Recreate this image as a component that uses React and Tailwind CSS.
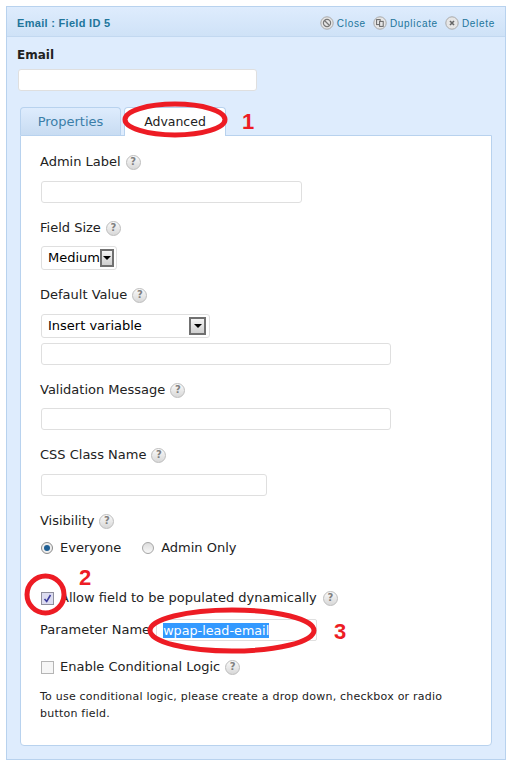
import React from 'react';

const Help = () => (
  <span className="inline-flex h-[15px] w-[15px] items-center justify-center rounded-full border border-[#bdbdbd] bg-gradient-to-b from-[#fafafa] to-[#d8d8d8] text-[10px] font-bold leading-none text-[#808080]">
    ?
  </span>
);

const Label = ({ children, className = '' }) => (
  <div className={`flex h-[16px] items-center gap-[5px] text-[13px] leading-[16px] text-[#222] ${className}`}>
    <span>{children}</span>
    <Help />
  </div>
);

const TextBox = ({ className = '' }) => (
  <div className={`h-[22px] rounded-[3px] border border-[#dfdfdf] bg-white ${className}`} />
);

const Arrow = () => (
  <span className="flex h-[18px] w-[17px] items-center justify-center border-2 border-[#707070] bg-gradient-to-b from-[#f4f4f4] to-[#cfcfcf]">
    <span className="h-0 w-0 border-x-[4px] border-t-[4px] border-x-transparent border-t-black" />
  </span>
);

const ActionIcon = ({ children }) => (
  <svg width="14" height="14" viewBox="0 0 14 14" fill="none">
    <circle cx="7" cy="7" r="6.2" fill="#e6e6e6" stroke="#a9a9a9" />
    {children}
  </svg>
);

const Action = ({ label, children }) => (
  <span className="flex items-center gap-[3px]">
    <ActionIcon>{children}</ActionIcon>
    <span className="tracking-[0.7px]">{label}</span>
  </span>
);

const Ring = ({ className, width, height }) => (
  <svg className={`pointer-events-none absolute ${className}`} width={width} height={height} viewBox={`0 0 ${width} ${height}`} fill="none">
    <ellipse cx={width / 2} cy={height / 2} rx={width / 2 - 3} ry={height / 2 - 3} stroke="#ed1c24" strokeWidth="5" />
  </svg>
);

const Num = ({ className, children }) => (
  <span className={`absolute font-['Liberation_Sans',sans-serif] text-[22px] font-bold leading-none text-[#ed1c24] ${className}`}>{children}</span>
);

export default function App() {
  return (
    <div className="relative h-[766px] w-[512px] overflow-hidden bg-white pl-[6px] pt-[6px] font-['DejaVu_Sans',sans-serif]">
      <div className="h-[754px] w-[500px] border border-[#b8d2ee] bg-[#deecfd]">
        <div className="flex h-[30px] items-center justify-between border-b border-[#c2d8f0] bg-gradient-to-b from-[#deecfd] to-[#cfe2f7] pl-[10px] pr-[10px] pt-[3px] font-['Liberation_Sans',sans-serif]">
          <span className="text-[11px] font-bold tracking-[0.3px] text-[#21759b]">Email : Field ID 5</span>
          <div className="flex items-center gap-[7px] text-[10px] text-[#21759b]">
            <Action label="Close">
              <circle cx="7" cy="7" r="3.6" stroke="#777" strokeWidth="1.2" />
              <path d="M4.5 4.5l5 5" stroke="#777" strokeWidth="1.2" />
            </Action>
            <Action label="Duplicate">
              <rect x="3.6" y="3.6" width="3.6" height="5" fill="#e6e6e6" stroke="#666" />
              <rect x="6.6" y="5.4" width="3.6" height="5" fill="#e6e6e6" stroke="#666" />
            </Action>
            <Action label="Delete">
              <path d="M5 5l4 4M9 5l-4 4" stroke="#666" strokeWidth="1.6" />
            </Action>
          </div>
        </div>

        <div className="pl-[10px] pt-[10px]">
          <div className="text-[12px] font-bold leading-[16px] text-[#222]">Email</div>
          <TextBox className="ml-[1px] mt-[6px] w-[239px]" />
        </div>

        <div className="ml-[13px] mt-[16px] flex h-[28px] items-start gap-[3px]">
          <div className="flex h-[28px] w-[101px] items-center justify-center rounded-t-[4px] border border-b-0 border-[#b8d2ee] bg-gradient-to-b from-[#deecfd] to-[#c8dcf2] text-[13px] text-[#3b7ea8]">
            Properties
          </div>
          <div className="relative z-10 flex h-[29px] w-[102px] items-center justify-center rounded-t-[4px] border border-b-0 border-[#b8d2ee] bg-white text-[12.5px] text-[#222]">
            Advanced
          </div>
        </div>

        <div className="ml-[13px] h-[611px] w-[472px] rounded-b-[4px] border border-[#b8d2ee] bg-white pl-[19px] pt-[18px]">
          <Label>Admin Label</Label>
          <TextBox className="ml-[1px] mt-[11px] w-[261px]" />

          <Label className="mt-[17px]">Field Size</Label>
          <div className="ml-[1px] mt-[10px] flex h-[24px] w-[76px] items-center justify-between rounded-[3px] border border-[#dfdfdf] pl-[6px] pr-[2px] text-[13px] text-black">
            <span>Medium</span>
            <Arrow />
          </div>

          <Label className="mt-[17px]">Default Value</Label>
          <div className="ml-[1px] mt-[11px] flex h-[24px] w-[169px] items-center justify-between rounded-[3px] border border-[#dfdfdf] pl-[6px] pr-[3px] text-[13px] text-black">
            <span>Insert variable</span>
            <Arrow />
          </div>
          <TextBox className="ml-[1px] mt-[5px] w-[350px]" />

          <Label className="mt-[17px]">Validation Message</Label>
          <TextBox className="ml-[1px] mt-[10px] w-[350px]" />

          <Label className="mt-[17px]">CSS Class Name</Label>
          <TextBox className="ml-[1px] mt-[11px] w-[226px]" />

          <Label className="mt-[17px]">Visibility</Label>
          <div className="mt-[11px] flex h-[16px] items-center text-[13px] text-[#222]">
            <span className="ml-[1px] flex h-[12px] w-[12px] items-center justify-center rounded-full border border-[#8a8a8a] bg-[#eee]">
              <span className="h-[6px] w-[6px] rounded-full bg-[#1f5f94]" />
            </span>
            <span className="ml-[7px]">Everyone</span>
            <span className="ml-[21px] h-[12px] w-[12px] rounded-full border border-[#a5a5a5] bg-gradient-to-b from-[#ddd] to-[#f8f8f8]" />
            <span className="ml-[7px]">Admin Only</span>
          </div>

          <div className="mt-[34px] flex h-[16px] items-center text-[13px] text-[#222]">
            <span className="ml-[1px] flex h-[13px] w-[13px] items-center justify-center border border-[#8f8f9d] bg-[#dcdcf0]">
              <svg width="9" height="9" viewBox="0 0 9 9" fill="none">
                <path d="M1.5 5l2.2 2.5L7.5 1" stroke="#3c3c9c" strokeWidth="1.6" />
              </svg>
            </span>
            <span className="ml-[6px]">Allow field to be populated dynamically</span>
            <span className="ml-[6px] flex"><Help /></span>
          </div>

          <div className="mt-[13px] flex h-[22px] items-center text-[13px] text-[#222]">
            <span>Parameter Name</span>
            <div className="ml-[6px] flex h-[22px] w-[161px] items-center rounded-[2px] border border-[#dfdfdf] pl-[6px]">
              <span className="bg-[#3399ff] text-[12.75px] leading-[15px] text-white">wpap-lead-email</span>
            </div>
          </div>

          <div className="mt-[18px] flex h-[16px] items-center text-[13px] text-[#222]">
            <span className="ml-[1px] h-[13px] w-[13px] border border-[#b5b5b5] bg-[#f6f6f6]" />
            <span className="ml-[6px]">Enable Conditional Logic</span>
            <span className="ml-[5px] flex"><Help /></span>
          </div>

          <p className="mt-[13px] w-[430px] text-[11px] leading-[17px] tracking-[0.22px] text-[#222]">
            To use conditional logic, please create a drop down, checkbox or radio button field.
          </p>
        </div>
      </div>

      <Ring className="left-[122px] top-[101px] z-20" width={106} height={37} />
      <Ring className="left-[24px] top-[573px] z-20" width={43} height={43} />
      <Ring className="left-[147px] top-[607px] z-20" width={170} height={47} />
      <Num className="left-[242px] top-[111px] z-20">1</Num>
      <Num className="left-[79px] top-[567px] z-20">2</Num>
      <Num className="left-[334px] top-[621px] z-20">3</Num>
    </div>
  );
}
